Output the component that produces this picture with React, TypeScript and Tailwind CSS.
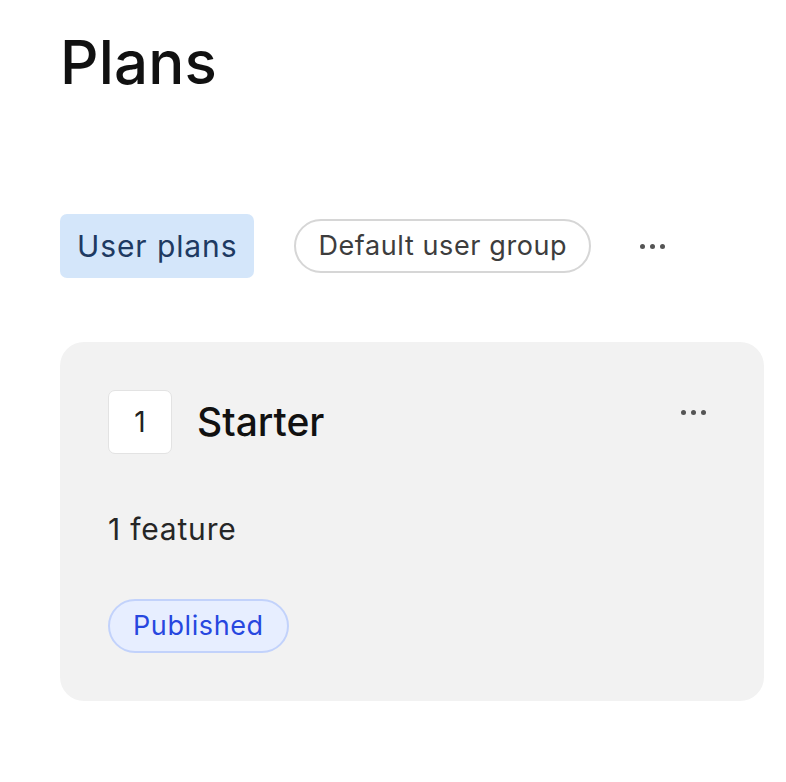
function Dots() {
  return (
    <span className="flex items-center gap-[5px]">
      <span className="h-[5px] w-[5px] rounded-full bg-[#555]" />
      <span className="h-[5px] w-[5px] rounded-full bg-[#555]" />
      <span className="h-[5px] w-[5px] rounded-full bg-[#555]" />
    </span>
  );
}

export default function App() {
  return (
    <div className="min-h-screen bg-white px-[60px] pt-[22px] font-['Inter',sans-serif]">
      <h1 className="text-[60px] leading-[80px] font-medium tracking-[0.2px] text-[#111]">Plans</h1>

      <div className="mt-[112px] flex items-center">
        <button className="h-[64px] rounded-[7px] bg-[#d4e6fa] px-[17px] text-[30px] leading-[40px] tracking-[0.9px] text-[#1e3a62]">
          User plans
        </button>
        <button className="ml-[40px] h-[54px] rounded-full border-2 border-[#d6d6d6] px-[22px] text-[27px] leading-[36px] tracking-[0.6px] text-[#3d3d3d]">
          Default user group
        </button>
        <button className="ml-[49px] flex h-[40px] items-center text-[#555]" aria-label="More">
          <Dots />
        </button>
      </div>

      <div className="mt-[64px] w-[704px] rounded-[24px] bg-[#f2f2f2] px-[48px] pt-[48px] pb-[48px]">
        <div className="flex items-start justify-between">
          <div className="flex items-center gap-[25px]">
            <div className="flex h-[64px] w-[64px] items-center justify-center rounded-[7px] border border-[#e3e3e3] bg-white text-[28px] text-[#222]">
              1
            </div>
            <div className="text-[39px] leading-[48px] font-medium text-[#111]">Starter</div>
          </div>
          <div className="mt-[20px] mr-[10px]">
            <Dots />
          </div>
        </div>
        <div className="mt-[55px] text-[30px] leading-[40px] tracking-[0.8px] text-[#262626]">1 feature</div>
        <div className="mt-[50px]">
          <span className="inline-flex h-[54px] items-center rounded-full border-2 border-[#c2d2fb] bg-[#e7eeff] px-[23px] text-[27px] leading-[36px] tracking-[0.6px] text-[#2747df]">
            Published
          </span>
        </div>
      </div>
    </div>
  );
}
